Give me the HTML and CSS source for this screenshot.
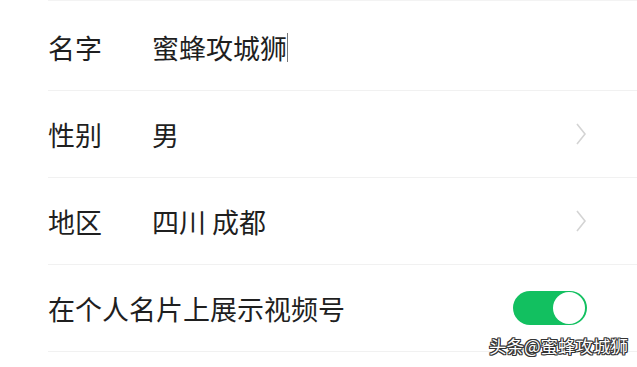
FILE: index.html
```html
<!DOCTYPE html>
<html lang="zh">
<head>
<meta charset="utf-8">
<link rel="stylesheet" href="styles.css">
</head>
<body>
<div class="page">
  <div class="list">
    <div class="row">
      <span class="label">名字</span>
      <span class="value">蜜蜂攻城狮<span class="cursor"></span></span>
    </div>
    <div class="row">
      <span class="label">性别</span>
      <span class="value">男</span>
      <svg class="chev" width="12" height="24" viewBox="0 0 12 24"><path d="M2 2 L10 12 L2 22" fill="none" stroke="#d4d4d4" stroke-width="1.6"/></svg>
    </div>
    <div class="row">
      <span class="label">地区</span>
      <span class="value">四川 成都</span>
      <svg class="chev" width="12" height="24" viewBox="0 0 12 24"><path d="M2 2 L10 12 L2 22" fill="none" stroke="#d4d4d4" stroke-width="1.6"/></svg>
    </div>
    <div class="row">
      <span class="label wide">在个人名片上展示视频号</span>
      <span class="toggle"><span class="knob"></span></span>
    </div>
  </div>
  <div class="watermark">头条@蜜蜂攻城狮</div>
</div>
</body>
</html>
```
FILE: styles.css
```css
html, body {
  margin: 0;
  padding: 0;
  background: #ffffff;
}
.page {
  position: relative;
  width: 637px;
  height: 367px;
  overflow: hidden;
  font-family: "Noto Sans CJK SC", "Noto Sans", sans-serif;
  color: #1f1f1f;
}
.list {
  padding-top: 3px;
  margin-left: 48px;
  border-top: 1px solid #f3f3f3;
}
.row {
  height: 87px;
  display: flex;
  align-items: center;
  border-bottom: 1px solid #f1f1f1;
  box-sizing: border-box;
  font-size: 27px;
  line-height: 1;
  position: relative;
}
.label {
  width: 104px;
  flex: none;
}
.label.wide {
  width: auto;
  flex: 1;
}
.value {
  flex: 1;
  display: flex;
  align-items: center;
}
.cursor {
  display: inline-block;
  width: 1px;
  height: 29px;
  background: #777;
}
.chev {
  margin-right: 50px;
}
.toggle {
  width: 74px;
  height: 34px;
  border-radius: 17px;
  background: #12c060;
  margin-right: 50px;
  display: flex;
  align-items: center;
  justify-content: flex-end;
  box-sizing: border-box;
  padding-right: 2px;
}
.knob {
  width: 32px;
  height: 32px;
  border-radius: 50%;
  background: #fff;
}
.watermark {
  position: absolute;
  left: 489px;
  top: 334px;
  font-size: 17.5px;
  line-height: 24px;
  color: #ffffff;
  text-shadow: -1px 0 #333, 1px 0 #333, 0 -1px #333, 0 1px #333, -1px -1px #333, 1px 1px #333, -1px 1px #333, 1px -1px #333;
}
```
